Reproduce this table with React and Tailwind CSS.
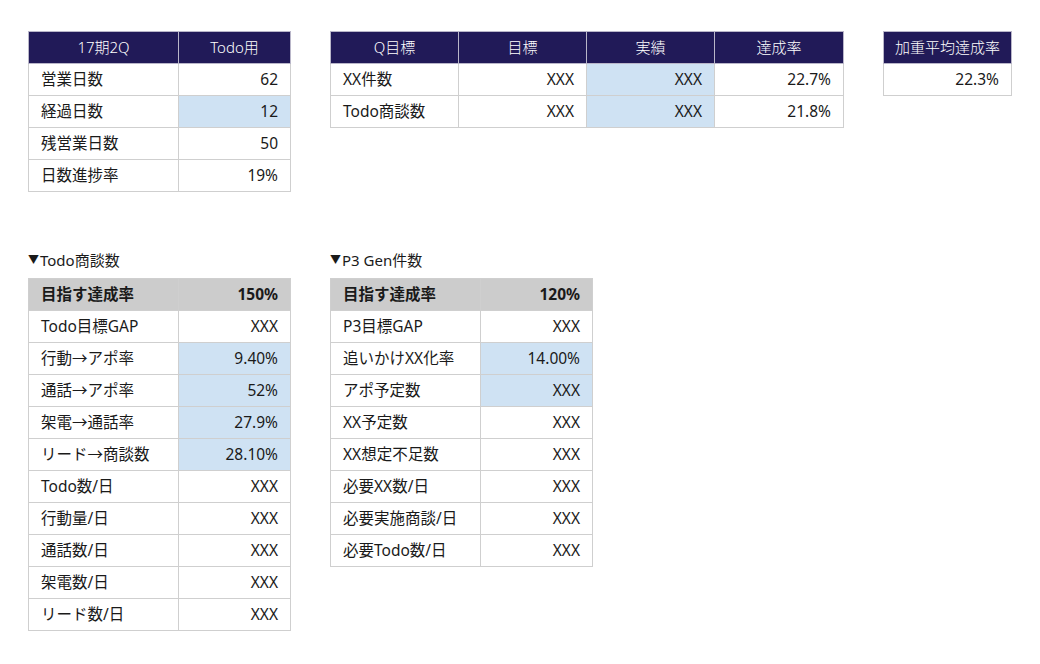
import React from "react";

const FONT = { fontFamily: '"Noto Sans", "Noto Sans CJK JP", sans-serif' };

function HeadCell({ children, w }) {
  return (
    <th
      className="h-8 border border-[#b9b6c9] bg-[#211a58] p-0 text-center text-[15px] font-light leading-none text-white"
      style={{ width: w }}
    >
      {children}
    </th>
  );
}

function Cell({ children, w, right, blue, gray, bold }) {
  return (
    <td
      className={
        "h-8 border border-[#cfcfcf] px-3 py-0 text-[15.5px] leading-none text-[#1a1a1a] " +
        (right ? "text-right " : "text-left ") +
        (blue ? "bg-[#cfe2f3] " : gray ? "bg-[#cccccc] " : "bg-white ") +
        (bold ? "font-bold" : "font-normal")
      }
      style={{ width: w }}
    >
      {children}
    </td>
  );
}

function Table({ children, className = "", w }) {
  return (
    <table className={"table-fixed border-collapse " + className} style={{ width: w }}>
      <tbody>{children}</tbody>
    </table>
  );
}

function Label({ children }) {
  return (
    <div className="mb-[8px] flex h-[20px] items-center text-[15px] leading-[20px] text-[#1a1a1a]">
      <span className="mr-[1px] text-[11px]">▼</span>
      <span>{children}</span>
    </div>
  );
}

const todoRows = [
  ["Todo目標GAP", "XXX", false],
  ["行動→アポ率", "9.40%", true],
  ["通話→アポ率", "52%", true],
  ["架電→通話率", "27.9%", true],
  ["リード→商談数", "28.10%", true],
  ["Todo数/日", "XXX", false],
  ["行動量/日", "XXX", false],
  ["通話数/日", "XXX", false],
  ["架電数/日", "XXX", false],
  ["リード数/日", "XXX", false],
];

const p3Rows = [
  ["P3目標GAP", "XXX", false],
  ["追いかけXX化率", "14.00%", true],
  ["アポ予定数", "XXX", true],
  ["XX予定数", "XXX", false],
  ["XX想定不足数", "XXX", false],
  ["必要XX数/日", "XXX", false],
  ["必要実施商談/日", "XXX", false],
  ["必要Todo数/日", "XXX", false],
];

export default function App() {
  return (
    <div className="h-[664px] w-[1040px] bg-white" style={FONT}>
      <div className="flex items-start pl-[28px] pt-[31px]">
        <Table w={262}>
          <tr>
            <HeadCell w={150}>17期2Q</HeadCell>
            <HeadCell w={112}>Todo用</HeadCell>
          </tr>
          <tr>
            <Cell>営業日数</Cell>
            <Cell right>62</Cell>
          </tr>
          <tr>
            <Cell>経過日数</Cell>
            <Cell right blue>12</Cell>
          </tr>
          <tr>
            <Cell>残営業日数</Cell>
            <Cell right>50</Cell>
          </tr>
          <tr>
            <Cell>日数進捗率</Cell>
            <Cell right>19%</Cell>
          </tr>
        </Table>

        <Table className="ml-[39px]" w={513}>
          <tr>
            <HeadCell w={128}>Q目標</HeadCell>
            <HeadCell w={128}>目標</HeadCell>
            <HeadCell w={128}>実績</HeadCell>
            <HeadCell w={129}>達成率</HeadCell>
          </tr>
          <tr>
            <Cell>XX件数</Cell>
            <Cell right>XXX</Cell>
            <Cell right blue>XXX</Cell>
            <Cell right>22.7%</Cell>
          </tr>
          <tr>
            <Cell>Todo商談数</Cell>
            <Cell right>XXX</Cell>
            <Cell right blue>XXX</Cell>
            <Cell right>21.8%</Cell>
          </tr>
        </Table>

        <Table className="ml-[39px]" w={128}>
          <tr>
            <HeadCell w={128}>加重平均達成率</HeadCell>
          </tr>
          <tr>
            <Cell right>22.3%</Cell>
          </tr>
        </Table>
      </div>

      <div className="mt-[58px] flex items-start pl-[28px]">
        <div className="flex flex-col">
          <Label>Todo商談数</Label>
          <Table w={262}>
            <tr>
              <Cell w={150} gray bold>目指す達成率</Cell>
              <Cell w={112} gray bold right>150%</Cell>
            </tr>
            {todoRows.map(([a, b, blue]) => (
              <tr key={a}>
                <Cell>{a}</Cell>
                <Cell right blue={blue}>{b}</Cell>
              </tr>
            ))}
          </Table>
        </div>

        <div className="ml-[39px] flex flex-col">
          <Label>P3 Gen件数</Label>
          <Table w={262}>
            <tr>
              <Cell w={150} gray bold>目指す達成率</Cell>
              <Cell w={112} gray bold right>120%</Cell>
            </tr>
            {p3Rows.map(([a, b, blue]) => (
              <tr key={a}>
                <Cell>{a}</Cell>
                <Cell right blue={blue}>{b}</Cell>
              </tr>
            ))}
          </Table>
        </div>
      </div>
    </div>
  );
}
